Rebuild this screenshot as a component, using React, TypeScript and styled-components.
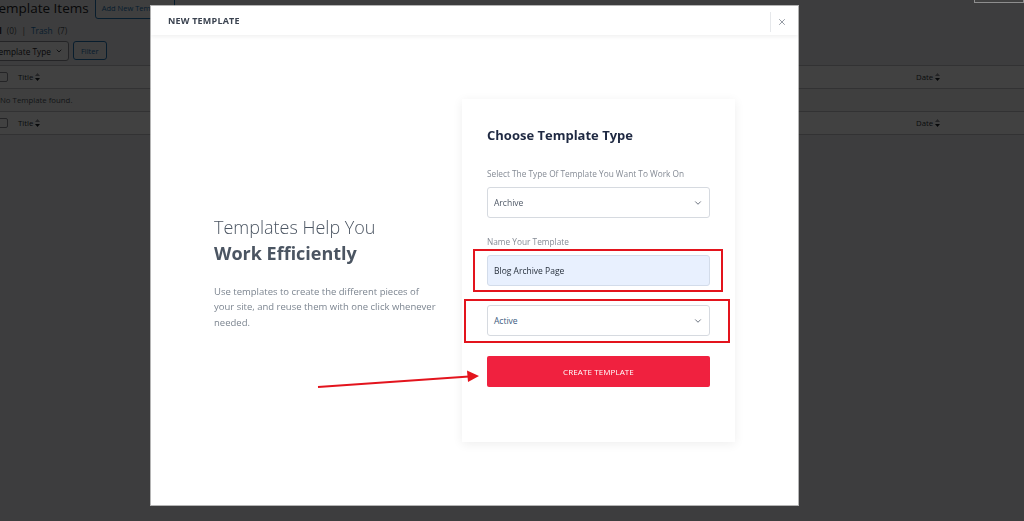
import styled, { createGlobalStyle } from "styled-components";
import { ChevronDown, X } from "lucide-react";

const GlobalStyle = createGlobalStyle`
  html, body {
    margin: 0;
    padding: 0;
  }
  body {
    width: 1024px;
    height: 521px;
    overflow: hidden;
    background: #f0f0f1;
    font-family: "Open Sans", "Noto Sans", sans-serif;
  }
`;

/* ---------- page behind the modal ---------- */

const WpPage = styled.div`
  margin: -5px 0 0 -9px;
  width: 1060px;
  color: #1d2327;
`;

const TitleRow = styled.div`
  display: flex;
  align-items: center;
  gap: 6px;
  height: 26px;
`;

const PageTitle = styled.h1`
  margin: 0;
  font-size: 13.5px;
  font-weight: 400;
`;

const OutlineButton = styled.span<{ $small?: boolean }>`
  display: inline-flex;
  align-items: center;
  height: ${(p) => (p.$small ? "17px" : "20px")};
  padding: 0 ${(p) => (p.$small ? "7px" : "6px")};
  border: 1px solid #2271b1;
  border-radius: 3px;
  background: #f6f7f7;
  color: #2271b1;
  font-size: 7.5px;
`;

const SubLinks = styled.div`
  display: flex;
  gap: 5px;
  margin-top: 4px;
  font-size: 8.3px;
  color: #50575e;
`;

const SubLink = styled.span<{ $current?: boolean }>`
  color: ${(p) => (p.$current ? "#1d2327" : "#2271b1")};
  font-weight: ${(p) => (p.$current ? 700 : 400)};
`;

const FilterBar = styled.div`
  display: flex;
  gap: 4px;
  margin-top: 5px;
`;

const FakeSelect = styled.span`
  display: inline-flex;
  align-items: center;
  gap: 4px;
  height: 18px;
  padding: 0 5px 0 2px;
  border: 1px solid #8c8f94;
  border-radius: 3px;
  background: #fff;
  font-size: 8.3px;
`;

const Table = styled.div`
  margin-top: 4px;
  border: 1px solid #c3c4c7;
  background: #fff;
`;

const TableRow = styled.div<{ $alt?: boolean }>`
  display: flex;
  align-items: center;
  height: 22px;
  border-bottom: 1px solid #c3c4c7;
  background: ${(p) => (p.$alt ? "#f6f7f7" : "#fff")};
  font-size: 7.8px;
  &:last-child {
    border-bottom: none;
  }
`;

const CheckCell = styled.span`
  width: 20px;
  display: flex;
  padding-left: 6px;
`;

const Checkbox = styled.span`
  width: 8px;
  height: 8px;
  border: 1px solid #8c8f94;
  border-radius: 2px;
  background: #fff;
`;

const TitleCell = styled.span`
  flex: 1;
  display: flex;
  align-items: center;
  gap: 2px;
  color: #2c3338;
`;

const DateCell = styled.span`
  width: 134px;
  display: flex;
  align-items: center;
  gap: 2px;
  color: #2c3338;
`;

const EmptyCell = styled.span`
  padding-left: 8px;
  color: #50575e;
`;

const SortIcon = () => (
  <svg width="5" height="8" viewBox="0 0 5 8">
    <path d="M2.5 0 L5 3 H0 Z" fill="#8c8f94" />
    <path d="M2.5 8 L5 5 H0 Z" fill="#1d2327" />
  </svg>
);

const ScreenOptions = styled.span`
  position: absolute;
  right: 0;
  top: -14px;
  width: 48px;
  height: 15px;
  border: 1px solid #8e8e8e;
  background: #424242;
`;

const Backdrop = styled.div`
  position: fixed;
  inset: 0;
  background: rgba(0, 0, 0, 0.745);
`;

/* ---------- modal ---------- */

const Modal = styled.div`
  position: fixed;
  left: 151px;
  top: 6px;
  width: 647px;
  height: 499px;
  display: flex;
  flex-direction: column;
  background: #fff;
  box-shadow: 0 0 0 1px rgba(210, 210, 210, 0.8);
`;

const ModalHeader = styled.div`
  position: relative;
  z-index: 1;
  height: 29px;
  flex: none;
  display: flex;
  align-items: center;
  justify-content: space-between;
  padding-left: 17px;
  background: #fff;
  box-shadow: 0 2px 4px rgba(0, 0, 0, 0.06);
`;

const ModalTitle = styled.span`
  font-size: 9px;
  font-weight: 700;
  color: #3b4350;
  letter-spacing: 0.2px;
`;

const CloseButton = styled.span`
  height: 20px;
  width: 21px;
  display: flex;
  align-items: center;
  justify-content: center;
  margin-top: 2px;
  padding-right: 6px;
  border-left: 1px solid #e6e8eb;
  color: #7f8792;
`;

const ModalBody = styled.div`
  flex: 1;
  display: flex;
  align-items: center;
  padding: 1px 63px 0;
`;

const Intro = styled.div`
  flex: 1;
  padding-top: 3px;
`;

const IntroHeading = styled.h2`
  margin: 0;
  font-size: 18px;
  line-height: 26px;
  font-weight: 300;
  color: #4b5562;
  strong {
    font-weight: 700;
  }
`;

const IntroText = styled.p`
  margin: 18px 0 0;
  width: 224px;
  font-size: 9.5px;
  line-height: 15.5px;
  color: #7c8590;
`;

const Card = styled.div`
  width: 273px;
  box-sizing: border-box;
  padding: 27px 25px 55px;
  background: #fff;
  box-shadow: 0 2px 10px rgba(0, 0, 0, 0.07);
`;

const CardTitle = styled.h3`
  margin: 0;
  font-size: 13px;
  line-height: 18px;
  font-weight: 700;
  color: #1f2942;
`;

const FieldLabel = styled.div<{ $gap: number }>`
  margin-top: ${(p) => p.$gap}px;
  font-size: 8.3px;
  line-height: 12px;
  color: #858b95;
`;

const Field = styled.div<{ $filled?: boolean; $gap: number; $ink?: string }>`
  margin-top: ${(p) => p.$gap}px;
  height: 31px;
  box-sizing: border-box;
  display: flex;
  align-items: center;
  justify-content: space-between;
  padding: 0 6px;
  border: 1px solid ${(p) => (p.$filled ? "#d3dcea" : "#d6dae0")};
  border-radius: 3px;
  background: ${(p) => (p.$filled ? "#e8f0fe" : "#fff")};
  color: ${(p) => p.$ink ?? "#4f5866"};
  font-size: 8.5px;
`;

const Marked = styled.div<{ $t: number; $r: number; $b: number; $l: number }>`
  position: relative;
  &::after {
    content: "";
    position: absolute;
    top: -${(p) => p.$t}px;
    right: -${(p) => p.$r}px;
    bottom: -${(p) => p.$b}px;
    left: -${(p) => p.$l}px;
    border: 2px solid #e3141d;
    pointer-events: none;
  }
`;

const SubmitButton = styled.div`
  margin-top: 20px;
  height: 31px;
  display: flex;
  align-items: center;
  justify-content: center;
  border-radius: 2px;
  background: #f0213f;
  color: #fff;
  font-size: 8px;
  letter-spacing: 0.1px;
`;

const Arrow = styled.svg`
  position: absolute;
  left: 160px;
  top: 360px;
`;

const App = () => {
  return (
    <>
      <GlobalStyle />
      <WpPage>
        <TitleRow>
          <PageTitle>Template Items</PageTitle>
          <OutlineButton>Add New Template</OutlineButton>
        </TitleRow>
        <SubLinks>
          <SubLink $current>All</SubLink>
          <span>(0)</span>
          <span>|</span>
          <SubLink>Trash</SubLink>
          <span>(7)</span>
        </SubLinks>
        <FilterBar>
          <FakeSelect>
            Template Type <ChevronDown size={8} strokeWidth={2.5} />
          </FakeSelect>
          <OutlineButton $small>Filter</OutlineButton>
        </FilterBar>
        <Table>
          <TableRow>
            <CheckCell>
              <Checkbox />
            </CheckCell>
            <TitleCell>
              Title <SortIcon />
            </TitleCell>
            <DateCell>
              Date <SortIcon />
            </DateCell>
          </TableRow>
          <TableRow $alt>
            <EmptyCell>No Template found.</EmptyCell>
          </TableRow>
          <TableRow>
            <CheckCell>
              <Checkbox />
            </CheckCell>
            <TitleCell>
              Title <SortIcon />
            </TitleCell>
            <DateCell>
              Date <SortIcon />
            </DateCell>
          </TableRow>
        </Table>
      </WpPage>
      <Backdrop>
        <ScreenOptions />
      </Backdrop>
      <Modal>
        <ModalHeader>
          <ModalTitle>NEW TEMPLATE</ModalTitle>
          <CloseButton>
            <X size={10} strokeWidth={2} />
          </CloseButton>
        </ModalHeader>
        <ModalBody>
          <Intro>
            <IntroHeading>
              Templates Help You
              <br />
              <strong>Work Efficiently</strong>
            </IntroHeading>
            <IntroText>
              Use templates to create the different pieces of your site, and
              reuse them with one click whenever needed.
            </IntroText>
          </Intro>
          <Card>
            <CardTitle>Choose Template Type</CardTitle>
            <FieldLabel $gap={24}>
              Select The Type Of Template You Want To Work On
            </FieldLabel>
            <Field $gap={7}>
              Archive
              <ChevronDown size={10} strokeWidth={2} />
            </Field>
            <FieldLabel $gap={18}>Name Your Template</FieldLabel>
            <Marked $t={6} $r={13} $b={6} $l={14}>
              <Field $gap={7} $filled $ink="#27303c">
                Blog Archive Page
              </Field>
            </Marked>
            <Marked $t={6} $r={20} $b={7} $l={23}>
              <Field $gap={19} $ink="#3b5b80">
                Active
                <ChevronDown size={10} strokeWidth={2} color="#4f5866" />
              </Field>
            </Marked>
            <SubmitButton>CREATE TEMPLATE</SubmitButton>
          </Card>
        </ModalBody>
        <Arrow width="180" height="30" viewBox="0 0 180 30">
          <line x1="7" y1="21" x2="158" y2="10.5" stroke="#e3141d" strokeWidth="2" />
          <path d="M168 10 L156 4.5 L157 16 Z" fill="#e3141d" />
        </Arrow>
      </Modal>
    </>
  );
};

export default App;
